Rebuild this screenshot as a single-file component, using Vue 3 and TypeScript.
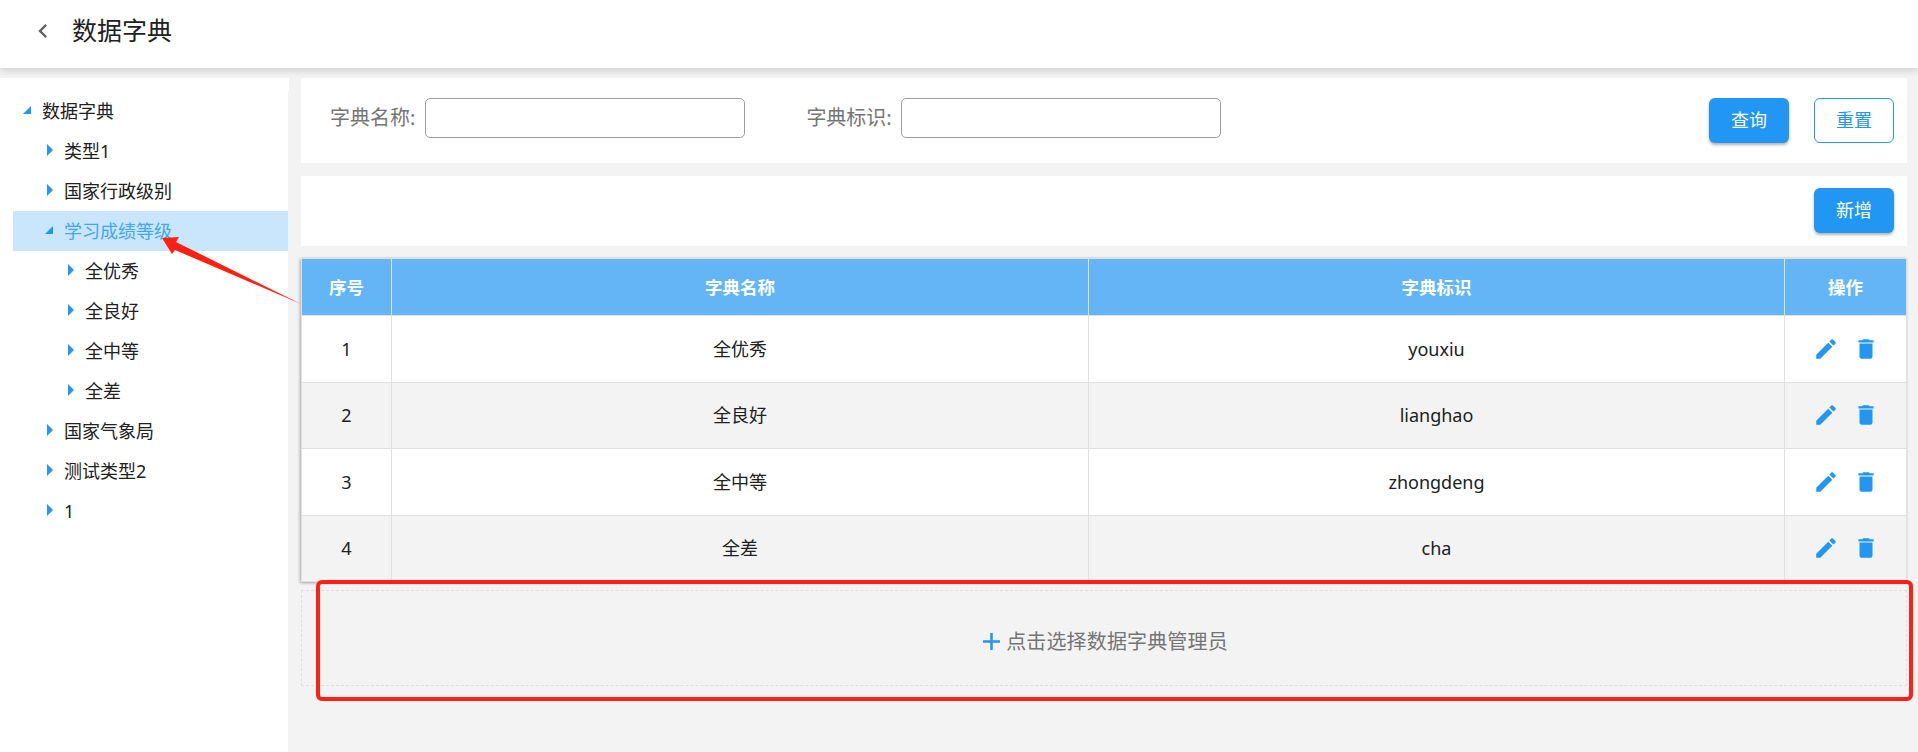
<script setup lang="ts">
interface TreeNode {
  label: string
  level: number
  open?: boolean
  active?: boolean
}

const tree: TreeNode[] = [
  { label: '数据字典', level: 0, open: true },
  { label: '类型1', level: 1 },
  { label: '国家行政级别', level: 1 },
  { label: '学习成绩等级', level: 1, open: true, active: true },
  { label: '全优秀', level: 2 },
  { label: '全良好', level: 2 },
  { label: '全中等', level: 2 },
  { label: '全差', level: 2 },
  { label: '国家气象局', level: 1 },
  { label: '测试类型2', level: 1 },
  { label: '1', level: 1 }
]

const rows = [
  { id: 1, name: '全优秀', key: 'youxiu' },
  { id: 2, name: '全良好', key: 'lianghao' },
  { id: 3, name: '全中等', key: 'zhongdeng' },
  { id: 4, name: '全差', key: 'cha' }
]
</script>

<template>
  <div class="page">
    <header class="topbar">
      <svg class="back" viewBox="0 0 24 24"><path d="M15.41,16.58L10.83,12L15.41,7.41L14,6L8,12L14,18L15.41,16.58Z" /></svg>
      <h1 class="title">数据字典</h1>
    </header>

    <div class="body">
      <aside class="side">
        <div class="side-cap"></div>
        <ul class="tree">
          <li
            v-for="node in tree"
            :key="node.label"
            class="node"
            :class="[`lv${node.level}`, { active: node.active }]"
          >
            <span class="caret" :class="node.open ? 'open' : 'shut'"></span>
            <span class="node-label">{{ node.label }}</span>
          </li>
        </ul>
      </aside>

      <main class="main">
        <section class="panel search">
          <label class="field first">
            <span class="field-label">字典名称:</span>
            <input class="field-input" type="text" />
          </label>
          <label class="field second">
            <span class="field-label">字典标识:</span>
            <input class="field-input" type="text" />
          </label>
          <div class="spacer"></div>
          <button class="btn primary" type="button">查询</button>
          <button class="btn outline" type="button">重置</button>
        </section>

        <section class="panel actions">
          <button class="btn primary" type="button">新增</button>
        </section>

        <div class="table-wrap">
          <table class="table">
            <colgroup>
              <col class="c1" />
              <col class="c2" />
              <col class="c3" />
              <col class="c4" />
            </colgroup>
            <thead>
              <tr>
                <th>序号</th>
                <th>字典名称</th>
                <th>字典标识</th>
                <th>操作</th>
              </tr>
            </thead>
            <tbody>
              <tr v-for="row in rows" :key="row.id">
                <td>{{ row.id }}</td>
                <td>{{ row.name }}</td>
                <td>{{ row.key }}</td>
                <td>
                  <div class="ops">
                    <svg class="op" viewBox="0 0 24 24"><path d="M20.71,7.04C21.1,6.65 21.1,6 20.71,5.63L18.37,3.29C18,2.9 17.35,2.9 16.96,3.29L15.12,5.12L18.87,8.87M3,17.25V21H6.75L17.81,9.93L14.06,6.18L3,17.25Z" /></svg>
                    <svg class="op" viewBox="0 0 24 24"><path d="M19,4H15.5L14.5,3H9.5L8.5,4H5V6H19M6,19A2,2 0 0,0 8,21H16A2,2 0 0,0 18,19V7H6V19Z" /></svg>
                  </div>
                </td>
              </tr>
            </tbody>
          </table>
        </div>

        <div class="picker">
          <svg class="plus" viewBox="0 0 16 16"><path d="M6.8,0H9.2V6.8H16V9.2H9.2V16H6.8V9.2H0V6.8H6.8Z" /></svg>
          <span>点击选择数据字典管理员</span>
        </div>
      </main>
    </div>

    <div class="mark-box"></div>
    <svg class="mark-arrow" viewBox="0 0 160 90" width="160" height="90">
      <polygon points="12,13 29,12 26,17 151,79 25,25 22,29" />
    </svg>
  </div>
</template>

<style>
html,
body {
  margin: 0;
  background: #f3f3f3;
}
</style>

<style scoped>
.page {
  position: relative;
  width: 1918px;
  height: 752px;
  overflow: hidden;
  background: #f3f3f3;
  font-family: "Noto Sans", "Noto Sans CJK SC", sans-serif;
  font-size: 18px;
  color: #212121;
}

.topbar {
  position: relative;
  z-index: 1;
  display: flex;
  align-items: center;
  height: 68px;
  box-sizing: border-box;
  padding-bottom: 6px;
  background: #fff;
  box-shadow: 0 2px 8px rgba(0, 0, 0, 0.16);
}

.back {
  width: 28px;
  height: 28px;
  margin-left: 29px;
  fill: #616161;
}

.title {
  margin: 0 0 0 15px;
  padding-bottom: 3px;
  font-size: 25px;
  line-height: 36px;
  font-weight: 400;
  color: #212121;
}

.body {
  display: flex;
  height: 674px;
  margin-top: 10px;
}

.side {
  flex: none;
  width: 288px;
  background: #fff;
}

.side-cap {
  width: 289px;
  height: 13px;
  background: #fff;
}

.tree {
  margin: 0;
  padding: 0 0 0 13px;
  list-style: none;
}

.node {
  display: flex;
  align-items: center;
  height: 40px;
  box-sizing: border-box;
  padding-bottom: 2px;
  line-height: 26px;
}

.node-label {
  margin-top: 2px;
}

.node.active {
  background: #cae6fd;
  color: #42a5f5;
}

.lv0 { padding-left: 10px; }
.lv1 { padding-left: 34px; }
.lv2 { padding-left: 55px; }

.caret {
  flex: none;
  width: 0;
  height: 0;
  border-style: solid;
}

.caret.shut {
  border-width: 6px 0 6px 6px;
  border-color: transparent transparent transparent #2196f3;
  margin-right: 11px;
}

.caret.open {
  border-width: 0 0 8px 8px;
  border-color: transparent transparent #2196f3 transparent;
  margin-right: 11px;
}

.lv1 .caret.open {
  margin-left: -2px;
}

.main {
  flex: none;
  width: 1606px;
  margin-left: 13px;
}

.panel {
  display: flex;
  align-items: center;
  background: #fff;
}

.search {
  height: 85px;
  padding: 20px 13px 0 29px;
  box-sizing: border-box;
  align-items: flex-start;
}

.field {
  display: flex;
  align-items: center;
  height: 40px;
}

.second {
  margin-left: 61px;
}

.field-label {
  font-size: 20px;
  line-height: 28px;
  color: #757575;
  white-space: nowrap;
}

.field-input {
  width: 320px;
  height: 40px;
  box-sizing: border-box;
  margin-left: 10px;
  padding: 0 8px;
  background: #fff;
  border: 1px solid #9e9e9e;
  border-radius: 5px;
  outline: none;
}

.second .field-input {
  margin-left: 9px;
}

.spacer {
  flex: 1;
}

.btn {
  width: 80px;
  height: 45px;
  box-sizing: border-box;
  border-radius: 6px;
  font-family: inherit;
  font-size: 18px;
  padding: 0 0 4px;
}

.primary {
  background: #2196f3;
  border: 0;
  color: #fff;
  box-shadow: 0 2px 3px rgba(0, 0, 0, 0.3);
}

.outline {
  margin-left: 25px;
  background: #fff;
  border: 1px solid #2196f3;
  color: #2196f3;
}

.actions {
  justify-content: flex-end;
  height: 70px;
  margin-top: 13px;
  padding: 12px 13px 0 0;
  box-sizing: border-box;
  align-items: flex-start;
}

.table-wrap {
  width: 1605px;
  margin: 12px 0 0;
  box-shadow: -1px 1px 3px rgba(0, 0, 0, 0.3), 1px 0 2px rgba(0, 0, 0, 0.12);
}

.table {
  width: 100%;
  table-layout: fixed;
  border-collapse: collapse;
  background: #fff;
}

.c1 { width: 90px; }
.c2 { width: 697px; }
.c3 { width: 696px; }
.c4 { width: 122px; }

th,
td {
  padding: 0;
  border: 1px solid #e0e0e0;
  text-align: center;
  font-size: 18px;
  font-weight: 400;
  line-height: 26px;
}

thead tr {
  height: 57px;
}

th {
  background: #64b5f6;
  color: #fff;
  font-weight: 700;
  font-size: 17.5px;
}

tbody tr {
  height: 66.5px;
}

tbody tr:nth-child(even) td {
  background: #f3f3f3;
}

.ops {
  display: flex;
  justify-content: center;
  gap: 14px;
}

.op {
  width: 26px;
  height: 26px;
  fill: #2196f3;
}

.picker {
  display: flex;
  align-items: center;
  justify-content: center;
  gap: 6px;
  height: 96px;
  margin-top: 8px;
  padding: 7px 0 0 3px;
  box-sizing: border-box;
  border: 1px dashed #dedede;
  font-size: 20px;
  line-height: 28px;
  letter-spacing: 0.15px;
  color: #757575;
}

.plus {
  width: 17px;
  height: 17px;
  fill: #2196f3;
}

.mark-box {
  position: absolute;
  left: 316px;
  top: 580px;
  width: 1597px;
  height: 121px;
  box-sizing: border-box;
  border: 4px solid #ff2015;
  border-radius: 6px;
  z-index: 2;
}

.mark-arrow {
  position: absolute;
  left: 150px;
  top: 225px;
  z-index: 2;
  fill: #ff2015;
}
</style>
